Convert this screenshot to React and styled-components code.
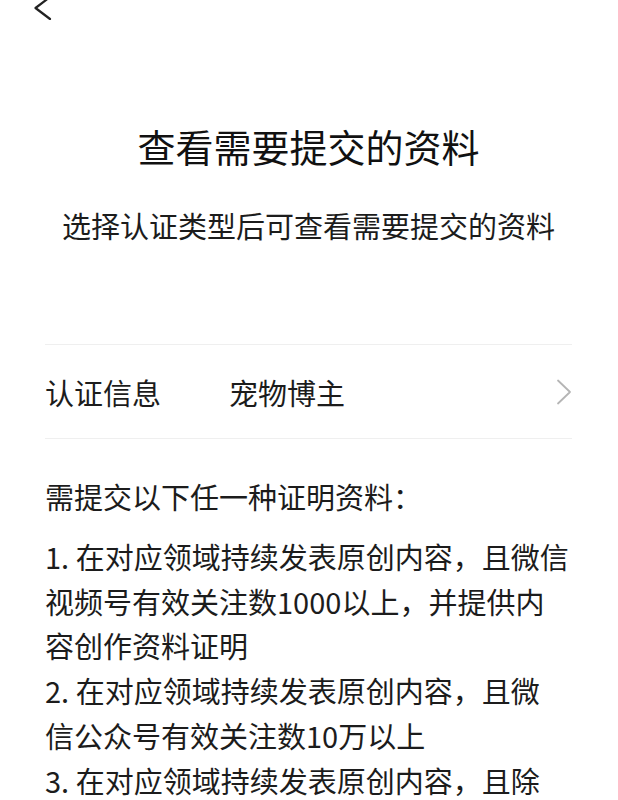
import React from "react";
import styled, { createGlobalStyle } from "styled-components";

const GlobalStyle = createGlobalStyle`
  html, body {
    margin: 0;
    padding: 0;
    background: #ffffff;
  }
  body {
    font-family: "Noto Sans CJK SC", "Noto Sans", "Liberation Sans", sans-serif;
    color: #1c1c1c;
    -webkit-font-smoothing: antialiased;
  }
`;

const Page = styled.div`
  width: 618px;
  height: 800px;
  overflow: hidden;
  box-sizing: border-box;
  padding: 0 46px 0 45px;
  background: #ffffff;
`;

const NavBar = styled.div`
  height: 20px;
  display: flex;
  align-items: flex-start;
  margin-left: -11px;
`;

const BackIcon = styled.svg`
  display: block;
  width: 18px;
  height: 20px;
  overflow: hidden;
`;

const Header = styled.header`
  display: flex;
  flex-direction: column;
  align-items: center;
  margin-top: 102px;
`;

const Title = styled.h1`
  margin: 0;
  font-size: 38px;
  line-height: 48px;
  font-weight: 400;
  color: #111111;
  white-space: nowrap;
`;

const Subtitle = styled.p`
  margin: 35px 0 0;
  font-size: 29px;
  line-height: 40px;
  font-weight: 400;
  color: #1c1c1c;
  white-space: nowrap;
`;

const InfoRow = styled.div`
  margin-top: 99px;
  height: 93px;
  display: grid;
  grid-template-columns: 184px 1fr auto;
  align-items: center;
  border-top: 1px solid #efefef;
  border-bottom: 1px solid #efefef;
`;

const RowLabel = styled.span`
  font-size: 29px;
  line-height: 40px;
  color: #1c1c1c;
`;

const RowValue = styled.span`
  font-size: 29px;
  line-height: 40px;
  color: #1c1c1c;
`;

const Chevron = styled.svg`
  display: block;
  width: 16px;
  height: 26px;
  margin-right: 0px;
`;

const Requirements = styled.section`
  margin-top: 35px;
`;

const Intro = styled.p`
  margin: 0;
  font-size: 29px;
  line-height: 44.8px;
  color: #1c1c1c;
  white-space: nowrap;
`;

const List = styled.ol`
  list-style: none;
  margin: 15px 0 0;
  padding: 0;
`;

const Item = styled.li`
  font-size: 29px;
  line-height: 44.8px;
  color: #1c1c1c;
`;

const Line = styled.span`
  display: block;
  white-space: nowrap;
`;

const items = [
  [
    "1. 在对应领域持续发表原创内容，且微信",
    "视频号有效关注数1000以上，并提供内",
    "容创作资料证明",
  ],
  ["2. 在对应领域持续发表原创内容，且微", "信公众号有效关注数10万以上"],
  ["3. 在对应领域持续发表原创内容，且除"],
];

export default function App() {
  return (
    <>
      <GlobalStyle />
      <Page>
        <NavBar>
          <BackIcon viewBox="0 0 18 20">
            <path
              d="M16 -3 L1.5 8 L16 19"
              fill="none"
              stroke="#222"
              strokeWidth="2.2"
              strokeLinecap="round"
              strokeLinejoin="round"
            />
          </BackIcon>
        </NavBar>

        <Header>
          <Title>查看需要提交的资料</Title>
          <Subtitle>选择认证类型后可查看需要提交的资料</Subtitle>
        </Header>

        <InfoRow>
          <RowLabel>认证信息</RowLabel>
          <RowValue>宠物博主</RowValue>
          <Chevron viewBox="0 0 16 26">
            <path
              d="M2 1.5 L14 13 L2 24.5"
              fill="none"
              stroke="#b5b5b5"
              strokeWidth="1.8"
              strokeLinecap="round"
              strokeLinejoin="round"
            />
          </Chevron>
        </InfoRow>

        <Requirements>
          <Intro>需提交以下任一种证明资料：</Intro>
          <List>
            {items.map((lines, i) => (
              <Item key={i}>
                {lines.map((l, j) => (
                  <Line key={j}>{l}</Line>
                ))}
              </Item>
            ))}
          </List>
        </Requirements>
      </Page>
    </>
  );
}
